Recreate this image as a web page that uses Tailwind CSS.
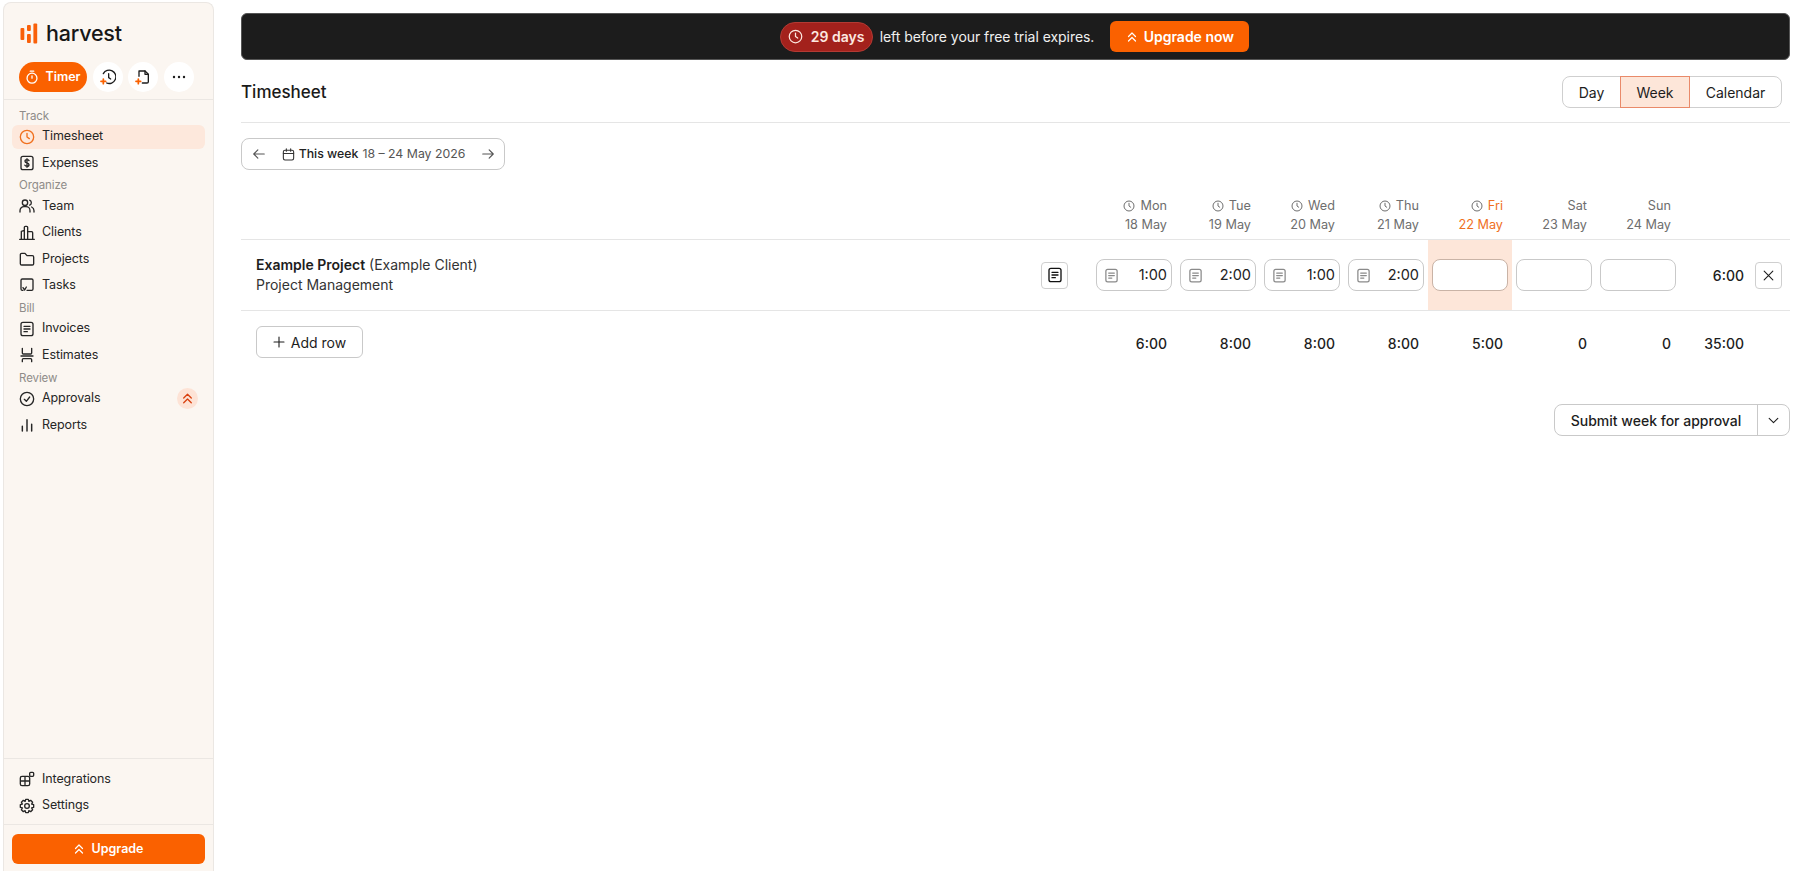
<!DOCTYPE html>
<html lang="en">
<head>
  <meta charset="UTF-8" />
  <title>Timesheet - Harvest</title>
  <script src="https://cdn.jsdelivr.net/npm/@tailwindcss/browser@4"></script>
</head>
<body class="bg-white text-[#1d1d1d] font-['Inter',sans-serif] overflow-hidden">
  <!-- shared icons -->
  <svg class="hidden">
    <symbol id="clock" viewBox="0 0 24 24"><circle cx="12" cy="12" r="10" fill="none" stroke="currentColor" stroke-width="2"/><path d="M12 6.500V12l3.500 2.500" fill="none" stroke="currentColor" stroke-width="2" stroke-linecap="round" stroke-linejoin="round"/></symbol>
    <symbol id="note" viewBox="0 0 24 24"><rect x="3" y="2" width="18" height="20" rx="3" fill="none" stroke="currentColor" stroke-width="2"/><path d="M7.500 8h9M7.500 12h9M7.500 16h5" fill="none" stroke="currentColor" stroke-width="2" stroke-linecap="round"/></symbol>
    <symbol id="chevrons" viewBox="0 0 24 24"><path d="M5 11l7-7 7 7M5 20l7-7 7 7" fill="none" stroke="currentColor" stroke-width="2.400" stroke-linecap="round" stroke-linejoin="round"/></symbol>
  </svg>

  <div class="flex w-[1800px] h-[871px]">
    <!-- sidebar -->
    <aside class="ml-[3px] mt-[2px] w-[211px] h-[869px] flex flex-col bg-[#fbf6f1] border-x border-t border-[#ebe7e3] rounded-t-lg">
      <div class="h-[59px] flex items-center pl-[16px] pt-[2px] gap-[8px]">
        <svg class="w-[18px] h-[21px] text-[#f9600a]" viewBox="0 0 18 21" fill="currentColor">
          <rect x="0.500" y="5" width="3.800" height="12" rx="1"/><rect x="7" y="2" width="3.800" height="6" rx="1"/><rect x="7" y="11" width="3.800" height="9" rx="1"/><rect x="13.400" y="0.500" width="3.800" height="20" rx="1"/>
        </svg>
        <span class="text-[21.500px] font-medium leading-none tracking-[-0.2px] text-[#171717]">harvest</span>
      </div>
      <div class="flex items-center gap-[5.500px] pl-[15px] h-[30px]">
        <div class="h-[30px] w-[68px] rounded-full bg-[#fa6100] text-white text-[12.500px] font-semibold flex items-center justify-center gap-[6px]">
          <svg class="w-[14px] h-[14px]" viewBox="0 0 24 24" fill="none" stroke="currentColor" stroke-width="2.200" stroke-linecap="round"><circle cx="12" cy="14" r="8.500"/><path d="M9 2h6M12 14V10"/></svg>
          Timer
        </div>
        <div class="w-[30px] h-[30px] rounded-full bg-white flex items-center justify-center">
          <svg class="w-[16px] h-[16px]" viewBox="0 0 24 24" fill="none" stroke="#1d1d1d" stroke-width="2" stroke-linecap="round"><path d="M5 7a10 10 0 1 1 5 14"/><path d="M13 7v6l3 2"/><path d="M5 15v7M1.500 18.500h7" stroke="#fa6100" stroke-width="2.600"/></svg>
        </div>
        <div class="w-[30px] h-[30px] rounded-full bg-white flex items-center justify-center">
          <svg class="w-[16px] h-[16px]" viewBox="0 0 24 24" fill="none" stroke="#1d1d1d" stroke-width="2" stroke-linecap="round" stroke-linejoin="round"><path d="M6 11V3h9l5 5v11a2 2 0 0 1-2 2h-7"/><path d="M15 3v5h5"/><path d="M5 15v7M1.500 18.500h7" stroke="#fa6100" stroke-width="2.600"/></svg>
        </div>
        <div class="w-[30px] h-[30px] rounded-full bg-white flex items-center justify-center">
          <svg class="w-[14px] h-[4px]" viewBox="0 0 14 4" fill="#1d1d1d"><circle cx="2" cy="2" r="1.200"/><circle cx="7" cy="2" r="1.200"/><circle cx="12" cy="2" r="1.200"/></svg>
        </div>
      </div>
      <div class="mt-[7px] border-t border-[#ebe7e3]"></div>

      <nav class="flex-1 flex flex-col pt-[7.500px] px-[8px] text-[12.500px] tracking-[-0.1px] text-[#262626]">
        <div class="h-[17px] pl-[7px] text-[11.500px] leading-[17px] text-[#8f8c89]">Track</div>
        <a class="h-[24px] mb-[2.400px] flex items-center gap-[7px] pl-[7px] rounded-md bg-[#fde8dc]">
          <svg class="w-[16px] h-[16px] text-[#f0701e]"><use href="#clock"/></svg>Timesheet
        </a>
        <a class="h-[24px] mb-[2.400px] flex items-center gap-[7px] pl-[7px]">
          <svg class="w-[16px] h-[16px]" viewBox="0 0 24 24" fill="none" stroke="currentColor" stroke-width="2" stroke-linecap="round"><rect x="3" y="2" width="18" height="20" rx="3"/><path d="M15 8.500c-.5-1-1.600-1.500-3-1.500-1.700 0-3 .8-3 2.400 0 3.300 6 1.800 6 5.100 0 1.700-1.300 2.500-3 2.500-1.500 0-2.600-.6-3.200-1.700M12 5.500v13"/></svg>Expenses
        </a>
        <div class="h-[17px] pl-[7px] text-[11.500px] leading-[17px] text-[#8f8c89]">Organize</div>
        <a class="h-[24px] mb-[2.400px] flex items-center gap-[7px] pl-[7px]">
          <svg class="w-[16px] h-[16px]" viewBox="0 0 24 24" fill="none" stroke="currentColor" stroke-width="2" stroke-linecap="round"><circle cx="9" cy="7" r="4"/><path d="M1.500 21v-2a6 6 0 0 1 6-6h3a6 6 0 0 1 6 6v2M16 3.300a4 4 0 0 1 0 7.400M19 13.500a6 6 0 0 1 3.500 5.500v2"/></svg>Team
        </a>
        <a class="h-[24px] mb-[2.400px] flex items-center gap-[7px] pl-[7px]">
          <svg class="w-[16px] h-[16px]" viewBox="0 0 24 24" fill="none" stroke="currentColor" stroke-width="2" stroke-linecap="round" stroke-linejoin="round"><path d="M1 21.500h22M3.500 21.500V9.500L8 8V3.500a1.500 1.500 0 0 1 1.500-1.500h2a1.500 1.500 0 0 1 1.500 1.500v18M13 10h6a1.500 1.500 0 0 1 1.500 1.500v10M8 8v13.500"/></svg>Clients
        </a>
        <a class="h-[24px] mb-[2.400px] flex items-center gap-[7px] pl-[7px]">
          <svg class="w-[16px] h-[16px]" viewBox="0 0 24 24" fill="none" stroke="currentColor" stroke-width="2" stroke-linejoin="round"><path d="M2 5.500a2 2 0 0 1 2-2h5l3 3.500h8a2 2 0 0 1 2 2v10a2 2 0 0 1-2 2H4a2 2 0 0 1-2-2z"/></svg>Projects
        </a>
        <a class="h-[24px] mb-[2.400px] flex items-center gap-[7px] pl-[7px]">
          <svg class="w-[16px] h-[16px]" viewBox="0 0 24 24" fill="none" stroke="currentColor" stroke-width="2" stroke-linecap="round" stroke-linejoin="round"><path d="M6 20H5a2 2 0 0 1-2-2V5a2 2 0 0 1 2-2h14a2 2 0 0 1 2 2v13a2 2 0 0 1-2 2h-7"/><path d="M6 16l2.500 3.500L11 15"/></svg>Tasks
        </a>
        <div class="h-[17px] pl-[7px] text-[11.500px] leading-[17px] text-[#8f8c89]">Bill</div>
        <a class="h-[24px] mb-[2.400px] flex items-center gap-[7px] pl-[7px]">
          <svg class="w-[16px] h-[16px]"><use href="#note"/></svg>Invoices
        </a>
        <a class="h-[24px] mb-[2.400px] flex items-center gap-[7px] pl-[7px]">
          <svg class="w-[16px] h-[16px]" viewBox="0 0 24 24" fill="none" stroke="currentColor" stroke-width="2" stroke-linecap="round" stroke-linejoin="round"><path d="M5 2v7a1.500 1.500 0 0 0 1.500 1.500h11A1.500 1.500 0 0 0 19 9V2M3 13.500h18M5 22v-3a1.500 1.500 0 0 1 1.500-1.500h11A1.500 1.500 0 0 1 19 19v3"/></svg>Estimates
        </a>
        <div class="h-[17px] pl-[7px] text-[11.500px] leading-[17px] text-[#8f8c89]">Review</div>
        <a class="h-[24px] mb-[2.400px] flex items-center gap-[7px] pl-[7px] pr-[7px]">
          <svg class="w-[16px] h-[16px]" viewBox="0 0 24 24" fill="none" stroke="currentColor" stroke-width="2" stroke-linecap="round" stroke-linejoin="round"><circle cx="12" cy="12" r="10"/><path d="M8 12.500l3 3 5-6.500"/></svg>Approvals
          <span class="ml-auto w-[21px] h-[21px] rounded-full bg-[#fde3d6] flex items-center justify-center">
            <svg class="w-[13px] h-[13px] text-[#d9400f]"><use href="#chevrons"/></svg>
          </span>
        </a>
        <a class="h-[24px] mb-[2.400px] flex items-center gap-[7px] pl-[7px]">
          <svg class="w-[16px] h-[16px]" viewBox="0 0 24 24" fill="none" stroke="currentColor" stroke-width="2.200" stroke-linecap="round"><path d="M5 21v-7M12 21V4M19 21v-10"/></svg>Reports
        </a>
      </nav>

      <div class="border-t border-[#ebe7e3] pt-[8.500px] pb-[6.500px] px-[8px] flex flex-col text-[12.500px] tracking-[-0.1px] text-[#262626]">
        <a class="h-[24px] mb-[2.400px] flex items-center gap-[7px] pl-[7px]">
          <svg class="w-[16px] h-[16px]" viewBox="0 0 24 24" fill="none" stroke="currentColor" stroke-width="2" stroke-linejoin="round"><rect x="2" y="8" width="14" height="14" rx="2.500"/><path d="M9 8v14M2 15h14"/><rect x="16" y="2" width="6" height="6" rx="1.500"/></svg>Integrations
        </a>
        <a class="h-[24px] flex items-center gap-[7px] pl-[7px]">
          <svg class="w-[16px] h-[16px]" viewBox="0 0 24 24" fill="none" stroke="currentColor" stroke-width="2" stroke-linejoin="round"><circle cx="12" cy="12" r="3.500"/><path d="M10 2h4l.8 3 2.700-1.500 2.900 2.900L19 9.200l3 .8v4l-3 .8 1.400 2.800-2.900 2.900-2.700-1.500-.8 3h-4l-.8-3-2.700 1.500-2.900-2.900L5 14.800 2 14v-4l3-.8-1.400-2.800 2.900-2.900L9.200 5z"/></svg>Settings
        </a>
      </div>
      <div class="border-t border-[#ebe7e3] pt-[9px] pb-[7px] px-[8px]">
        <div class="h-[30px] rounded-md bg-[#fa6100] text-white text-[12.500px] font-semibold flex items-center justify-center gap-[6px]">
          <svg class="w-[12px] h-[12px]"><use href="#chevrons"/></svg>Upgrade
        </div>
      </div>
    </aside>

    <!-- main -->
    <main class="ml-[27px] w-[1549px] flex flex-col">
      <div class="mt-[13px] h-[47px] rounded-md bg-[#1c1c1c] border border-[#555] flex items-center justify-center text-[14px] text-white pr-[2px]">
        <div class="h-[30px] w-[93px] rounded-full bg-[#a3211c] border border-[#b33a33] font-semibold flex items-center justify-center gap-[8px] text-[#fde8e0]">
          <svg class="w-[15px] h-[15px]"><use href="#clock"/></svg>29 days
        </div>
        <span class="ml-[7px] text-[#f0f0f0] tracking-[-0.05px]">left before your free trial expires.</span>
        <div class="ml-[16px] h-[31px] w-[139px] rounded-md bg-[#fa6100] font-semibold flex items-center justify-center gap-[6px]">
          <svg class="w-[12px] h-[12px]"><use href="#chevrons"/></svg>Upgrade now
        </div>
      </div>

      <div class="mt-[16px] h-[32px] pb-[14px] flex items-center justify-between border-b border-[#e5e5e5] pr-[8px] box-content">
        <h1 class="pt-[2px] text-[17px] font-medium text-[#1a1a1a]">Timesheet</h1>
        <div class="flex h-[32px] text-[14px] border border-[#cfcfcf] rounded-lg">
          <div class="w-[57px] flex items-center justify-center">Day</div>
          <div class="w-[70px] -my-px h-[32px] flex items-center justify-center bg-[#fde6d9] border border-[#e98a6a]">Week</div>
          <div class="w-[91px] flex items-center justify-center">Calendar</div>
        </div>
      </div>

      <div class="mt-[15px] h-[32px] w-[264px] border border-[#c9c9c9] rounded-lg flex items-center justify-between pl-[10px] pr-[9px] text-[12.300px] text-[#555]">
        <svg class="w-[14px] h-[14px]" viewBox="0 0 24 24" fill="none" stroke="currentColor" stroke-width="2" stroke-linecap="round" stroke-linejoin="round"><path d="M21 12H3M10 5l-7 7 7 7"/></svg>
        <span class="flex items-center gap-[4px]">
          <svg class="w-[13px] h-[13px] text-[#333]" viewBox="0 0 24 24" fill="none" stroke="currentColor" stroke-width="2" stroke-linecap="round"><rect x="2.500" y="4" width="19" height="18" rx="3"/><path d="M2.500 10h19M8 1.500V6M16 1.500V6"/></svg>
          <span class="font-medium text-[#222]">This week</span> 18 – 24 May 2026
        </span>
        <svg class="w-[14px] h-[14px]" viewBox="0 0 24 24" fill="none" stroke="currentColor" stroke-width="2" stroke-linecap="round" stroke-linejoin="round"><path d="M3 12h18M14 5l7 7-7 7"/></svg>
      </div>

      <!-- timesheet table -->
      <div class="mt-[23px] grid grid-cols-[851px_repeat(7,84px)_110px] text-[12.700px]">
        <div></div>
        <div class="h-[46px] pr-[9px] text-right leading-[19px] text-[#6e6e6e] pt-[3px]"><div class="flex items-center justify-end gap-[5px]"><svg class="w-[12px] h-[12px]"><use href="#clock"/></svg>Mon</div>18 May</div>
        <div class="h-[46px] pr-[9px] text-right leading-[19px] text-[#6e6e6e] pt-[3px]"><div class="flex items-center justify-end gap-[5px]"><svg class="w-[12px] h-[12px]"><use href="#clock"/></svg>Tue</div>19 May</div>
        <div class="h-[46px] pr-[9px] text-right leading-[19px] text-[#6e6e6e] pt-[3px]"><div class="flex items-center justify-end gap-[5px]"><svg class="w-[12px] h-[12px]"><use href="#clock"/></svg>Wed</div>20 May</div>
        <div class="h-[46px] pr-[9px] text-right leading-[19px] text-[#6e6e6e] pt-[3px]"><div class="flex items-center justify-end gap-[5px]"><svg class="w-[12px] h-[12px]"><use href="#clock"/></svg>Thu</div>21 May</div>
        <div class="h-[46px] pr-[9px] text-right leading-[19px] text-[#f0701e] pt-[3px]"><div class="flex items-center justify-end gap-[5px]"><svg class="w-[12px] h-[12px] text-[#6e6e6e]"><use href="#clock"/></svg>Fri</div>22 May</div>
        <div class="h-[46px] pr-[9px] text-right leading-[19px] text-[#6e6e6e] pt-[3px]">Sat<br />23 May</div>
        <div class="h-[46px] pr-[9px] text-right leading-[19px] text-[#6e6e6e] pt-[3px]">Sun<br />24 May</div>
        <div></div>

        <!-- project row -->
        <div class="h-[72px] border-y border-[#e5e5e5] pl-[15px] pr-[24px] flex items-center justify-between text-[14px]">
          <div class="leading-[20px]">
            <div><span class="font-semibold">Example Project</span> <span class="text-[#333]">(Example Client)</span></div>
            <div class="text-[#333]">Project Management</div>
          </div>
          <div class="w-[27px] h-[27px] border border-[#cfcfcf] rounded flex items-center justify-center">
            <svg class="w-[16px] h-[16px] text-[#111]"><use href="#note"/></svg>
          </div>
        </div>
        <div class="h-[72px] border-y border-[#e5e5e5] flex items-center px-[4px]"><div class="w-[76px] h-[32px] border border-[#c9c9c9] rounded-lg flex items-center justify-between pl-[7px] pr-[4px] text-[14.500px] text-[#222]"><svg class="w-[15px] h-[15px] text-[#8a8a8a]"><use href="#note"/></svg>1:00</div></div>
        <div class="h-[72px] border-y border-[#e5e5e5] flex items-center px-[4px]"><div class="w-[76px] h-[32px] border border-[#c9c9c9] rounded-lg flex items-center justify-between pl-[7px] pr-[4px] text-[14.500px] text-[#222]"><svg class="w-[15px] h-[15px] text-[#8a8a8a]"><use href="#note"/></svg>2:00</div></div>
        <div class="h-[72px] border-y border-[#e5e5e5] flex items-center px-[4px]"><div class="w-[76px] h-[32px] border border-[#c9c9c9] rounded-lg flex items-center justify-between pl-[7px] pr-[4px] text-[14.500px] text-[#222]"><svg class="w-[15px] h-[15px] text-[#8a8a8a]"><use href="#note"/></svg>1:00</div></div>
        <div class="h-[72px] border-y border-[#e5e5e5] flex items-center px-[4px]"><div class="w-[76px] h-[32px] border border-[#c9c9c9] rounded-lg flex items-center justify-between pl-[7px] pr-[4px] text-[14.500px] text-[#222]"><svg class="w-[15px] h-[15px] text-[#8a8a8a]"><use href="#note"/></svg>2:00</div></div>
        <div class="h-[72px] border-y border-[#e5e5e5] flex items-center px-[4px] bg-[#fde6d9]"><div class="w-[76px] h-[32px] bg-white border border-[#c9b3a6] rounded-lg"></div></div>
        <div class="h-[72px] border-y border-[#e5e5e5] flex items-center px-[4px]"><div class="w-[76px] h-[32px] border border-[#c9c9c9] rounded-lg"></div></div>
        <div class="h-[72px] border-y border-[#e5e5e5] flex items-center px-[4px]"><div class="w-[76px] h-[32px] border border-[#c9c9c9] rounded-lg"></div></div>
        <div class="h-[72px] border-y border-[#e5e5e5] flex items-center justify-end pr-[8px] text-[14px] font-medium">
          6:00
          <div class="ml-[11px] w-[27px] h-[27px] border border-[#cfcfcf] rounded flex items-center justify-center">
            <svg class="w-[13px] h-[13px]" viewBox="0 0 24 24" fill="none" stroke="currentColor" stroke-width="2" stroke-linecap="round"><path d="M4 4l16 16M20 4L4 20"/></svg>
          </div>
        </div>

        <!-- totals row -->
        <div class="h-[65px] pl-[15px] pt-[15px]">
          <div class="w-[107px] h-[32px] border border-[#c9c9c9] rounded-md flex items-center justify-center gap-[6px] text-[14px] font-normal">
            <svg class="w-[12px] h-[12px]" viewBox="0 0 24 24" fill="none" stroke="currentColor" stroke-width="2.200" stroke-linecap="round"><path d="M12 2v20M2 12h20"/></svg>Add row
          </div>
        </div>
        <div class="h-[65px] pr-[9px] flex items-center justify-end text-[14px] font-medium pb-[1px]">6:00</div>
        <div class="h-[65px] pr-[9px] flex items-center justify-end text-[14px] font-medium pb-[1px]">8:00</div>
        <div class="h-[65px] pr-[9px] flex items-center justify-end text-[14px] font-medium pb-[1px]">8:00</div>
        <div class="h-[65px] pr-[9px] flex items-center justify-end text-[14px] font-medium pb-[1px]">8:00</div>
        <div class="h-[65px] pr-[9px] flex items-center justify-end text-[14px] font-medium pb-[1px]">5:00</div>
        <div class="h-[65px] pr-[9px] flex items-center justify-end text-[14px] font-medium pb-[1px]">0</div>
        <div class="h-[65px] pr-[9px] flex items-center justify-end text-[14px] font-medium pb-[1px]">0</div>
        <div class="h-[65px] pr-[46px] flex items-center justify-end text-[14px] font-medium pb-[1px]">35:00</div>
      </div>

      <div class="mt-[28px] flex justify-end">
        <div class="h-[32px] flex border border-[#c9c9c9] rounded-lg text-[14px] font-medium">
          <div class="w-[203px] flex items-center justify-center border-r border-[#c9c9c9]">Submit week for approval</div>
          <div class="w-[31px] flex items-center justify-center">
            <svg class="w-[13px] h-[13px]" viewBox="0 0 24 24" fill="none" stroke="currentColor" stroke-width="2" stroke-linecap="round" stroke-linejoin="round"><path d="M4 8l8 8 8-8"/></svg>
          </div>
        </div>
      </div>
    </main>
  </div>
</body>
</html>
